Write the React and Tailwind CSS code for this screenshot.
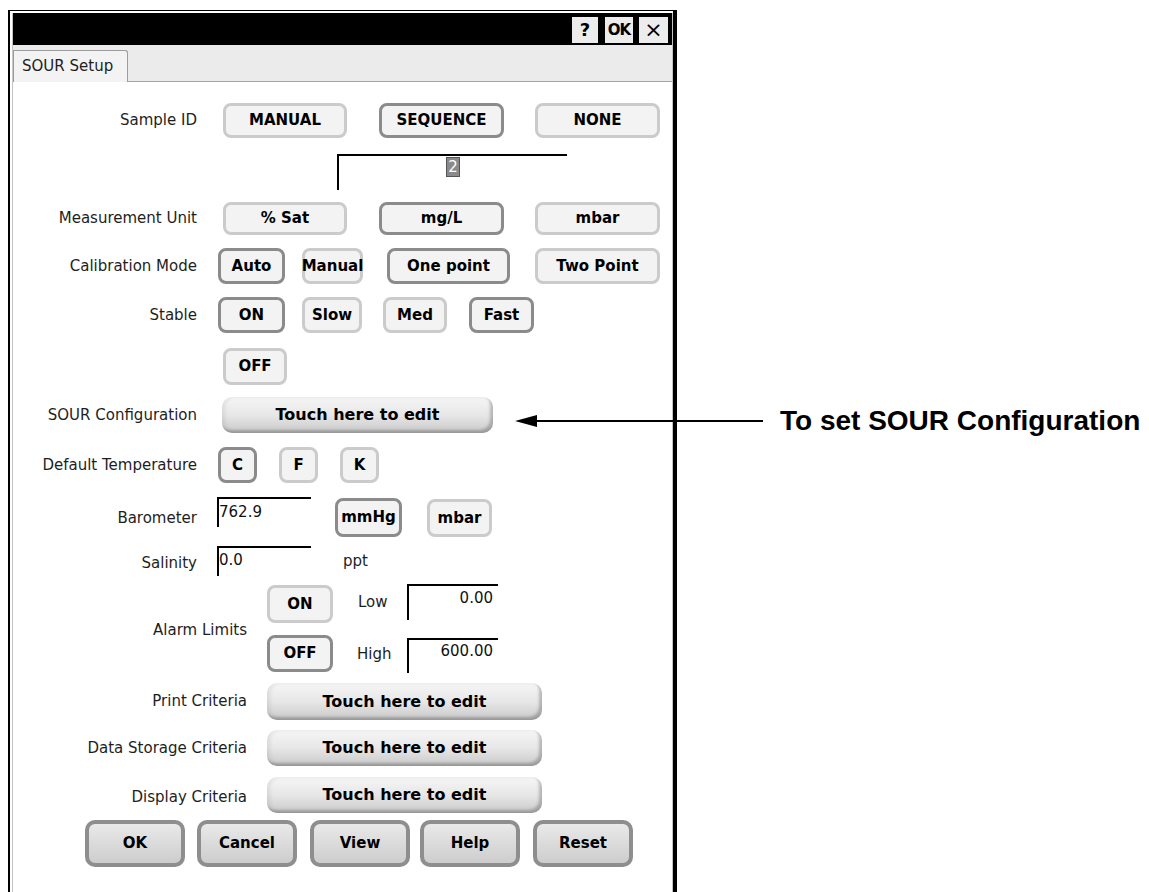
import React from 'react';
import clsx from 'clsx';

function Toggle({ on, className, children }) {
  return (
    <button
      className={clsx(
        'flex items-center justify-center rounded-[8px] border-[3px] bg-[#f3f3f3] text-[15px] font-bold leading-none text-black',
        on ? 'border-[#8b8b8b]' : 'border-[#cbcbcb]',
        className
      )}
    >
      {children}
    </button>
  );
}

function EditButton({ className }) {
  return (
    <button
      className={clsx(
        'flex items-center justify-center rounded-[10px] bg-gradient-to-b from-[#f6f6f6] via-[#e7e7e7] to-[#c9c9c9] text-[16px] font-bold leading-none text-black shadow-[inset_-3px_-3px_3px_rgba(0,0,0,0.22),inset_3px_0_4px_rgba(0,0,0,0.08)]',
        className
      )}
    >
      Touch here to edit
    </button>
  );
}

function BigButton({ className, children }) {
  return (
    <button
      className={clsx(
        'flex h-[47px] w-[100px] items-center justify-center rounded-[10px] border-[4px] border-[#8e8e8e] bg-gradient-to-b from-[#e9e9e9] to-[#cdcdcd] text-[15px] font-bold leading-none text-black',
        className
      )}
    >
      {children}
    </button>
  );
}

// labels carry their own alignment
function Label({ className, children }) {
  return <span className={clsx('shrink-0 text-[15px] text-[#1e1e1e]', className)}>{children}</span>;
}

function Field({ className, children }) {
  return (
    <div className={clsx('shrink-0 border-l-2 border-t-2 border-black bg-white text-[15px] leading-[18px] text-[#111]', className)}>
      {children}
    </div>
  );
}

export default function App() {
  return (
    <div className="relative h-[892px] w-[1149px] overflow-hidden bg-white font-['DejaVu_Sans',Verdana,sans-serif]">
      <div className="ml-[8px] mt-[10px] h-[882px] w-[669px] border-l-2 border-r-4 border-t border-black">
        <div className="ml-[2px] mt-[2px] h-full border-l border-r border-[#c4c4c4]">
          {/* title bar */}
          <div className="flex h-[32px] justify-end gap-[7px] bg-black pr-[4px] pt-[4px]">
            <div className="flex h-[26px] w-[26px] items-center justify-center bg-[#ececec] text-[18px] font-bold leading-none">?</div>
            <div className="flex h-[26px] w-[28px] items-center justify-center bg-[#ececec] text-[15px] font-bold leading-none tracking-[-1px]">OK</div>
            <div className="ml-[-1px] flex h-[26px] w-[29px] items-center justify-center bg-[#ececec] text-[22px] leading-none">×</div>
          </div>

          {/* tabs */}
          <div className="flex h-[37px] items-end border-b border-[#a3a3a3] bg-[#ebebeb]">
            <div className="-mb-px flex h-[32px] w-[115px] items-center rounded-tr-[3px] border-l border-r border-t border-[#9c9c9c] bg-[#f3f3f3] pl-[8px] text-[15px] text-[#1e1e1e]">
              SOUR Setup
            </div>
          </div>

          {/* form */}
          <div className="flex flex-col">
            <div className="mt-[21px] flex h-[35px] items-center">
              <Label className="w-[184px] text-right">Sample ID</Label>
              <Toggle className="ml-[26px] h-[35px] w-[124px]">MANUAL</Toggle>
              <Toggle on className="ml-[32px] h-[35px] w-[125px]">SEQUENCE</Toggle>
              <Toggle className="ml-[31px] h-[35px] w-[125px]">NONE</Toggle>
            </div>

            <div className="mt-[16px] flex h-[36px]">
              <Field className="ml-[324px] h-[36px] w-[230px] pt-[2px] text-center">
                <span className="bg-[#8a8a8a] px-[1px] text-white outline outline-1 outline-[#555]">2</span>
              </Field>
            </div>

            <div className="mt-[12px] flex h-[33px] items-center">
              <Label className="w-[184px] text-right">Measurement Unit</Label>
              <Toggle className="ml-[26px] h-[33px] w-[124px]">% Sat</Toggle>
              <Toggle on className="ml-[32px] h-[33px] w-[125px]">mg/L</Toggle>
              <Toggle className="ml-[31px] h-[33px] w-[125px]">mbar</Toggle>
            </div>

            <div className="mt-[13px] flex h-[36px] items-center">
              <Label className="w-[184px] text-right">Calibration Mode</Label>
              <Toggle on className="ml-[21px] h-[36px] w-[67px]">Auto</Toggle>
              <Toggle className="ml-[17px] h-[36px] w-[61px]">Manual</Toggle>
              <Toggle on className="ml-[24px] h-[36px] w-[123px]">One point</Toggle>
              <Toggle className="ml-[25px] h-[36px] w-[125px]">Two Point</Toggle>
            </div>

            <div className="mt-[13px] flex h-[36px] items-center">
              <Label className="w-[184px] text-right">Stable</Label>
              <Toggle on className="ml-[21px] h-[36px] w-[67px]">ON</Toggle>
              <Toggle className="ml-[17px] h-[36px] w-[60px]">Slow</Toggle>
              <Toggle className="ml-[21px] h-[36px] w-[64px]">Med</Toggle>
              <Toggle on className="ml-[22px] h-[36px] w-[65px]">Fast</Toggle>
            </div>

            <div className="mt-[15px] flex h-[37px] items-center">
              <Toggle className="ml-[210px] h-[37px] w-[64px]">OFF</Toggle>
            </div>

            <div className="mt-[12px] flex h-[36px] items-center">
              <Label className="w-[184px] text-right">SOUR Configuration</Label>
              <EditButton className="ml-[25px] h-[36px] w-[271px]" />
            </div>

            <div className="mt-[14px] flex h-[36px] items-center">
              <Label className="w-[184px] text-right">Default Temperature</Label>
              <Toggle on className="ml-[21px] h-[36px] w-[39px]">C</Toggle>
              <Toggle className="ml-[22px] h-[36px] w-[39px]">F</Toggle>
              <Toggle className="ml-[22px] h-[36px] w-[39px]">K</Toggle>
            </div>

            <div className="mt-[14px] flex h-[40px] items-center">
              <Label className="w-[184px] pt-[2px] text-right">Barometer</Label>
              <Field className="ml-[20px] h-[30px] w-[94px] self-start pt-[4px]">762.9</Field>
              <Toggle on className="ml-[24px] h-[39px] w-[67px] self-end">mmHg</Toggle>
              <Toggle className="ml-[25px] h-[38px] w-[65px] self-end">mbar</Toggle>
            </div>

            <div className="mt-[9px] flex h-[30px] items-center">
              <Label className="w-[184px] pt-[4px] text-right">Salinity</Label>
              <Field className="ml-[20px] h-[30px] w-[94px] self-start pt-[3px]">0.0</Field>
              <Label className="ml-[32px]">ppt</Label>
            </div>

            <div className="mt-[8px] flex h-[89px]">
              <Label className="w-[234px] self-center pt-[3px] text-right">Alarm Limits</Label>
              <div className="ml-[20px] flex flex-col">
                <div className="flex h-[39px]">
                  <Toggle className="mt-[1px] h-[38px] w-[66px]">ON</Toggle>
                  <Label className="ml-[25px] w-[49px] pt-[7px]">Low</Label>
                  <Field className="h-[36px] w-[91px] pr-[5px] pt-[3px] text-right">0.00</Field>
                </div>
                <div className="mt-[12px] flex h-[38px]">
                  <Toggle on className="h-[37px] w-[66px]">OFF</Toggle>
                  <Label className="ml-[24px] w-[50px] pt-[8px]">High</Label>
                  <Field className="mt-[3px] h-[35px] w-[91px] pr-[5px] pt-[2px] text-right">600.00</Field>
                </div>
              </div>
            </div>

            <div className="mt-[10px] flex h-[37px] items-center">
              <Label className="w-[234px] text-right">Print Criteria</Label>
              <EditButton className="ml-[20px] h-[37px] w-[275px]" />
            </div>

            <div className="mt-[10px] flex h-[36px] items-center">
              <Label className="w-[234px] text-right">Data Storage Criteria</Label>
              <EditButton className="ml-[20px] h-[36px] w-[275px]" />
            </div>

            <div className="mt-[11px] flex h-[36px] items-center">
              <Label className="w-[234px] pt-[5px] text-right">Display Criteria</Label>
              <EditButton className="ml-[20px] h-[36px] w-[275px]" />
            </div>

            <div className="mt-[7px] flex h-[47px] items-center">
              <BigButton className="ml-[72px]">OK</BigButton>
              <BigButton className="ml-[12px]">Cancel</BigButton>
              <BigButton className="ml-[13px]">View</BigButton>
              <BigButton className="ml-[10px]">Help</BigButton>
              <BigButton className="ml-[13px]">Reset</BigButton>
            </div>
          </div>
        </div>
      </div>

      {/* callout */}
      <svg className="absolute left-[513px] top-[412px]" width="252" height="18" viewBox="0 0 252 18">
        <polygon points="2,9 24,3 24,15" fill="#000" />
        <line x1="20" y1="9" x2="250" y2="9" stroke="#000" strokeWidth="2" />
      </svg>
      <div className="absolute left-[780px] top-[405px] whitespace-nowrap font-['Liberation_Sans',Arial,sans-serif] text-[28px] font-bold leading-[32px] text-black">
        To set SOUR Configuration
      </div>
    </div>
  );
}
